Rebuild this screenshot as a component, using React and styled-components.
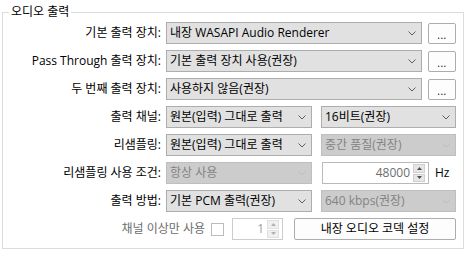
import React from "react";
import styled, { createGlobalStyle } from "styled-components";

const Global = createGlobalStyle`
  html, body { margin: 0; padding: 0; background: #fff; }
  body {
    font-family: "Open Sans", "Noto Sans CJK KR", sans-serif;
    font-size: 12px;
    color: #000;
  }
`;

const Page = styled.div`
  box-sizing: border-box;
  width: 470px;
  height: 255px;
  padding: 4px 0 0 2px;
`;

const Group = styled.fieldset`
  box-sizing: border-box;
  margin: 0;
  width: 462px;
  min-inline-size: 0;
  border: 1px solid #dcdcdc;
  padding: 2px 7px 8px 6px;
`;

const Legend = styled.legend`
  padding: 0 2px;
  font-size: 12px;
  line-height: 16px;
`;

const Form = styled.div`
  display: grid;
  grid-template-columns: 152px 290px;
  grid-auto-rows: 22px;
  column-gap: 5px;
  row-gap: 6px;
`;

const Label = styled.div`
  display: flex;
  align-items: center;
  justify-content: flex-end;
  white-space: nowrap;
  line-height: 16px;
`;

const Field = styled.div`
  display: flex;
  align-items: center;
  gap: ${(p) => p.$gap ?? 6}px;
`;

const WideRow = styled.div`
  grid-column: 1 / -1;
  display: flex;
  align-items: center;
  justify-content: flex-end;
`;

const SelectBox = styled.div`
  box-sizing: border-box;
  height: 22px;
  width: ${(p) => (p.$w ? `${p.$w}px` : "auto")};
  flex: ${(p) => (p.$w ? "none" : "1")};
  display: flex;
  align-items: center;
  padding-left: 3px;
  background: ${(p) => (p.$disabled ? "#cccccc" : "#e1e1e1")};
  border: 1px solid ${(p) => (p.$disabled ? "#bfbfbf" : "#adadad")};
  color: ${(p) => (p.$disabled ? "#838383" : "#000")};
`;

const SelectText = styled.span`
  flex: 1;
  white-space: nowrap;
  overflow: hidden;
  line-height: 16px;
`;

const ChevronSvg = styled.svg`
  flex: none;
  margin-right: 5px;
  margin-left: 4px;
`;

const Chevron = ({ disabled }) => (
  <ChevronSvg width="8" height="5" viewBox="0 0 8 5">
    <polyline
      points="0.5,0.5 4,4 7.5,0.5"
      fill="none"
      stroke={disabled ? "#bdbdbd" : "#606060"}
      strokeWidth="1"
    />
  </ChevronSvg>
);

const Select = ({ w, disabled, children }) => (
  <SelectBox $w={w} $disabled={disabled}>
    <SelectText>{children}</SelectText>
    <Chevron disabled={disabled} />
  </SelectBox>
);

const Button = styled.div`
  box-sizing: border-box;
  flex: none;
  width: ${(p) => p.$w}px;
  height: ${(p) => p.$h ?? 22}px;
  display: flex;
  align-items: center;
  justify-content: center;
  background: #fdfdfd;
  border: 1px solid #adadad;
  border-radius: 2px;
  margin-left: ${(p) => p.$ml ?? 0}px;
  line-height: 16px;
  white-space: nowrap;
`;

const Dots = styled.span`
  font-size: 10px;
  line-height: 10px;
  padding-top: 4px;
  letter-spacing: 0.5px;
`;

const SpinBox = styled.div`
  box-sizing: border-box;
  flex: none;
  width: ${(p) => p.$w}px;
  height: 22px;
  display: flex;
  align-items: stretch;
  background: #fff;
  border: 1px solid ${(p) => (p.$disabled ? "#cccccc" : "#b9b9b9")};
  margin-left: ${(p) => p.$ml ?? 0}px;
`;

const SpinValue = styled.span`
  flex: 1;
  text-align: right;
  padding-right: 3px;
  line-height: 20px;
  color: ${(p) => (p.$disabled ? "#a0a0a0" : "#6d6d6d")};
`;

const SpinButtons = styled.div`
  flex: none;
  width: 12px;
  margin: 1px 3px 1px 0;
  display: flex;
  flex-direction: column;
  gap: 1px;
`;

const SpinBtn = styled.div`
  flex: 1;
  display: flex;
  align-items: center;
  justify-content: center;
  background: ${(p) => (p.$disabled ? "#f0f0f0" : "#e6e6e6")};
  border: 1px solid ${(p) => (p.$disabled ? "#e0e0e0" : "#d0d0d0")};
`;

const Tri = ({ up, disabled }) => (
  <svg width="5" height="3" viewBox="0 0 5 3">
    <polygon
      points={up ? "0,3 5,3 2.5,0" : "0,0 5,0 2.5,3"}
      fill={disabled ? "#b0b0b0" : "#505050"}
    />
  </svg>
);

const Spin = ({ w, ml, value, disabled }) => (
  <SpinBox $w={w} $ml={ml} $disabled={disabled}>
    <SpinValue $disabled={disabled}>{value}</SpinValue>
    <SpinButtons>
      <SpinBtn $disabled={disabled}>
        <Tri up disabled={disabled} />
      </SpinBtn>
      <SpinBtn $disabled={disabled}>
        <Tri disabled={disabled} />
      </SpinBtn>
    </SpinButtons>
  </SpinBox>
);

const Unit = styled.span`
  margin-left: 6px;
  line-height: 16px;
`;

const MutedText = styled.span`
  color: #6d6d6d;
  white-space: nowrap;
  line-height: 16px;
`;

const Check = styled.span`
  box-sizing: border-box;
  flex: none;
  width: 13px;
  height: 13px;
  margin-left: 6px;
  border: 1px solid #bcbcbc;
  background: #fff;
`;

const MoreButton = () => (
  <Button $w={28} $h={21}>
    <Dots>...</Dots>
  </Button>
);

export default function App() {
  return (
    <>
      <Global />
      <Page>
        <Group>
          <Legend>오디오 출력</Legend>
          <Form>
            <Label>기본 출력 장치:</Label>
            <Field>
              <Select>내장 WASAPI Audio Renderer</Select>
              <MoreButton />
            </Field>

            <Label>Pass Through 출력 장치:</Label>
            <Field>
              <Select>기본 출력 장치 사용(권장)</Select>
              <MoreButton />
            </Field>

            <Label>두 번째 출력 장치:</Label>
            <Field>
              <Select>사용하지 않음(권장)</Select>
              <MoreButton />
            </Field>

            <Label>출력 채널:</Label>
            <Field $gap={9}>
              <Select w={146}>원본(입력) 그대로 출력</Select>
              <Select w={135}>16비트(권장)</Select>
            </Field>

            <Label>리샘플링:</Label>
            <Field $gap={9}>
              <Select w={146}>원본(입력) 그대로 출력</Select>
              <Select w={135} disabled>
                중간 품질(권장)
              </Select>
            </Field>

            <Label>리샘플링 사용 조건:</Label>
            <Field $gap={0}>
              <Select w={146} disabled>
                항상 사용
              </Select>
              <Spin w={107} ml={10} value="48000" />
              <Unit>Hz</Unit>
            </Field>

            <Label>출력 방법:</Label>
            <Field $gap={9}>
              <Select w={146}>기본 PCM 출력(권장)</Select>
              <Select w={135} disabled>
                640 kbps(권장)
              </Select>
            </Field>

            <WideRow>
              <MutedText>채널 이상만 사용</MutedText>
              <Check />
              <Spin w={51} ml={8} value="1" disabled />
              <Button $w={162} $ml={11}>
                내장 오디오 코덱 설정
              </Button>
            </WideRow>
          </Form>
        </Group>
      </Page>
    </>
  );
}
